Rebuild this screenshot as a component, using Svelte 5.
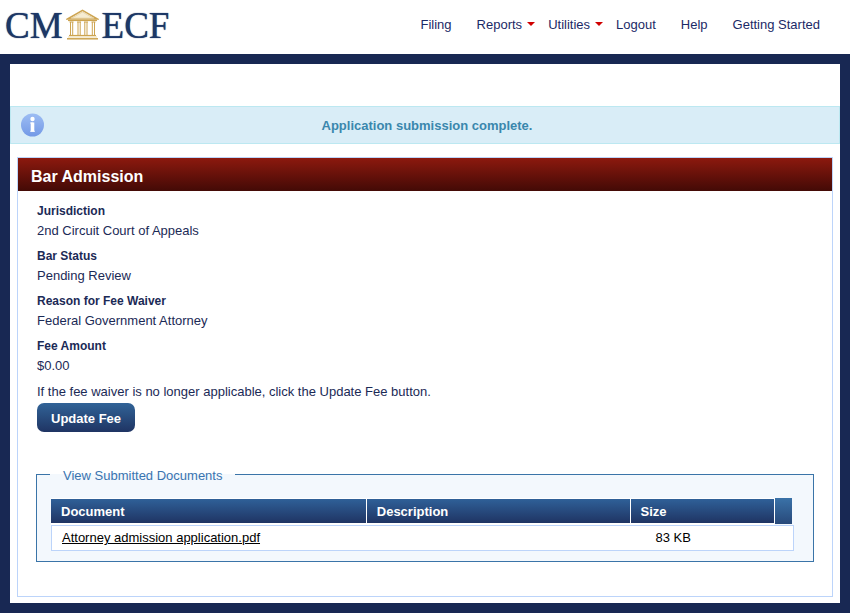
<script>
  const nav = [
    { label: 'Filing' },
    { label: 'Reports', menu: true },
    { label: 'Utilities', menu: true },
    { label: 'Logout' },
    { label: 'Help' },
    { label: 'Getting Started' }
  ];

  const details = [
    ['Jurisdiction', '2nd Circuit Court of Appeals'],
    ['Bar Status', 'Pending Review'],
    ['Reason for Fee Waiver', 'Federal Government Attorney'],
    ['Fee Amount', '$0.00']
  ];

  const documents = [{ name: 'Attorney admission application.pdf', description: '', size: '83 KB' }];
</script>

<div class="page">
  <header>
    <a class="logo" href="#home">
      <span>CM</span>
      <svg width="33" height="31" viewBox="0 0 33 31" fill="none" stroke="#cda450" aria-hidden="true">
        <path d="M1.5 10 16.5 1.3 31.5 10z" stroke-width="1.5" />
        <path d="M5.5 9.2 16.5 3 27.5 9.2z" fill="#f6ecd2" stroke="#dfc68c" stroke-width=".7" />
        <path d="M2 11.5h29" stroke-width="1.2" />
        <path d="M3.5 13h4M11 13h4M18 13h4M25.500 13h4" stroke-width="1" />
        <path d="M4.5 13v13M6.700 13v13M12 13v13M14.200 13v13M18.800 13v13M21 13v13M26.300 13v13M28.500 13v13" stroke-width="1" />
        <path d="M3 26.5h27" stroke-width="1.2" />
        <path d="M2 28h29" stroke="#ecd9a9" stroke-width="1" />
        <path d="M1 29.8h31" stroke-width="1.5" />
      </svg>
      <span>ECF</span>
    </a>
    <nav>
      {#each nav as item}
        <a href="#{item.label}" class:menu={item.menu}>{item.label}</a>
      {/each}
    </nav>
  </header>

  <main>
    <div class="notice" role="status">
      <svg width="24" height="24" viewBox="0 0 24 24" aria-hidden="true">
        <defs>
          <linearGradient id="info" x1="0" y1="0" x2="0" y2="1">
            <stop offset="0" stop-color="#9dbdf3" />
            <stop offset="1" stop-color="#7399e6" />
          </linearGradient>
        </defs>
        <circle cx="11.500" cy="12" r="11.5" fill="url(#info)" />
        <circle cx="11.500" cy="6" r="2.200" fill="#fff" />
        <path d="M9.700 9.500h3.600v9h-3.600z" fill="#fff" />
        <path d="M9.300 10h3M9.300 18.300h4.500" stroke="#fff" stroke-width="1" />
      </svg>
      <strong>Application submission complete.</strong>
    </div>

    <section class="panel">
      <h1>Bar Admission</h1>
      <div class="body">
        <dl>
          {#each details as [term, value]}
            <dt>{term}</dt>
            <dd>{value}</dd>
          {/each}
        </dl>
        <p>If the fee waiver is no longer applicable, click the Update Fee button.</p>
        <button type="button">Update Fee</button>

        <fieldset>
          <legend>View Submitted Documents</legend>
          <table>
            <colgroup>
              <col class="doc" />
              <col class="desc" />
              <col />
              <col class="tail" />
            </colgroup>
            <thead>
              <tr>
                <th scope="col">Document</th>
                <th scope="col">Description</th>
                <th scope="col">Size</th>
                <td class="corner"></td>
              </tr>
            </thead>
            <tbody>
              {#each documents as doc}
                <tr>
                  <td><a href="#document">{doc.name}</a></td>
                  <td>{doc.description}</td>
                  <td class="size" colspan="2">{doc.size}</td>
                </tr>
              {/each}
            </tbody>
          </table>
        </fieldset>
      </div>
    </section>
  </main>
</div>

<style>
  :global(body) {
    background: #182853;
  }

  .page {
    font: 13px/20px 'Liberation Sans', Arial, sans-serif;
    color: #1b2a56;
  }

  header {
    display: flex;
    justify-content: space-between;
    height: 54px;
    padding: 0 30px 0 5px;
    box-sizing: border-box;
    background: #fff;
  }

  .logo {
    display: flex;
    align-items: flex-start;
    padding-top: 9px;
    gap: 3px;
    font: 37px/34px 'Liberation Serif', 'Times New Roman', serif;
    color: #1c3766;
    text-shadow: 0 0 1px #1c3766;
    text-decoration: none;
  }

  nav {
    display: flex;
    gap: 25px;
    padding-top: 15px;
  }

  nav a {
    color: #1b2a66;
    text-decoration: none;
    white-space: nowrap;
  }

  .menu {
    display: flex;
    margin-right: -12px;
  }

  .menu::after {
    content: '';
    margin: 7px 0 0 5px;
    width: 0;
    height: 0;
    border: 4px solid transparent;
    border-top-color: #d00000;
    border-bottom: 0;
  }

  main {
    margin: 10px;
    padding: 42px 0 6px;
    background: #fff;
  }

  .notice {
    display: flex;
    align-items: center;
    height: 36px;
    padding: 0 10px;
    border: 1px solid #bce8f1;
    background: #d9edf7;
    color: #3a87ad;
  }

  .notice strong {
    flex: 1;
    padding: 2px 20px 0 0;
    text-align: center;
  }

  .panel {
    margin: 13px 7px 0;
    border: 1px solid #bcd4fa;
  }

  h1 {
    margin: 0;
    padding: 4px 13px 0;
    font-size: 16px;
    line-height: 29px;
    color: #fff;
    background: linear-gradient(#8c190e, #430a06);
  }

  .body {
    padding: 10px 18px 34px;
  }

  dl {
    margin: 0 1px;
  }

  dt {
    font-size: 12px;
    font-weight: bold;
  }

  dd {
    margin: 0 0 6px;
    line-height: 19px;
  }

  p {
    margin: 0 1px;
    padding: 1px 0;
  }

  button {
    display: block;
    margin: 0 1px;
    padding: 2px 14px 0;
    height: 29px;
    border: 0;
    border-radius: 7px;
    font: bold 13px/27px 'Liberation Sans', Arial, sans-serif;
    color: #fff;
    background: linear-gradient(#316397, #1f3463);
  }

  fieldset {
    min-width: 0;
    margin: 32px 0 0;
    padding: 14px 19px 10px 14px;
    border: 1px solid #3a74a8;
    background: #f3f8fd;
  }

  legend {
    margin-left: -1px;
    padding: 4px 13px 0;
    line-height: 16px;
    color: #3a74b0;
  }

  table {
    width: 100%;
    table-layout: fixed;
    border-collapse: separate;
    border-spacing: 0;
  }

  .doc {
    width: 42.5%;
  }

  .desc {
    width: 35.5%;
  }

  .tail {
    width: 19px;
  }

  th {
    height: 24px;
    padding: 2px 10px 0;
    box-sizing: border-box;
    height: 27px;
    border: 1px solid #fff;
    border-width: 1px 1px 2px 0;
    text-align: left;
    color: #fff;
    background: linear-gradient(#2f6098, #1f3463) padding-box;
  }

  .corner {
    padding: 0;
    border: solid transparent;
    border-width: 0 2px 1px 0;
    background: linear-gradient(#3a72a8, #28497a) padding-box;
  }

  tbody td {
    height: 24px;
    padding: 0 10px;
    border: solid #bcd4fa;
    border-width: 1px 0;
    color: #000;
    background: #fff;
  }

  tbody td:first-child {
    border-left-width: 1px;
  }

  tbody td:last-child {
    border-right-width: 1px;
  }

  tbody .size {
    padding-left: 25px;
  }

  tbody a {
    color: #000;
  }
</style>
